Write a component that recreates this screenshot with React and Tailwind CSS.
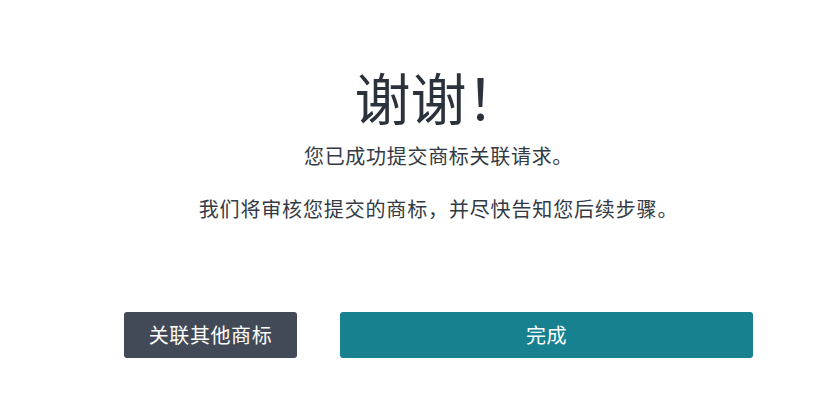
export default function App() {
  return (
    <div
      className="min-h-[396px] w-full bg-white"
      style={{ fontFamily: '"Noto Sans CJK SC", "Noto Sans", sans-serif' }}
    >
      <div className="ml-[124px] w-[629px] pt-[56px]">
        <h1 className="text-center text-[56px] leading-[80px] font-normal text-[#2b323c]">
          谢谢！
        </h1>
        <p className="mt-[5px] text-center text-[20px] leading-[30px] tracking-[0.7px] text-[#333a44]">
          您已成功提交商标关联请求。
        </p>
        <p className="mt-[23px] text-center text-[20px] leading-[30px] tracking-[0.85px] text-[#333a44]">
          我们将审核您提交的商标，并尽快告知您后续步骤。
        </p>
        <div className="mt-[88px] flex gap-[43px]">
          <button className="h-[46px] w-[173px] rounded-[3px] bg-[#434a57] text-[20px] tracking-[0.6px] text-white">
            关联其他商标
          </button>
          <button className="h-[46px] w-[413px] rounded-[3px] bg-[#17818f] text-[20px] tracking-[0.6px] text-white">
            完成
          </button>
        </div>
      </div>
    </div>
  );
}
